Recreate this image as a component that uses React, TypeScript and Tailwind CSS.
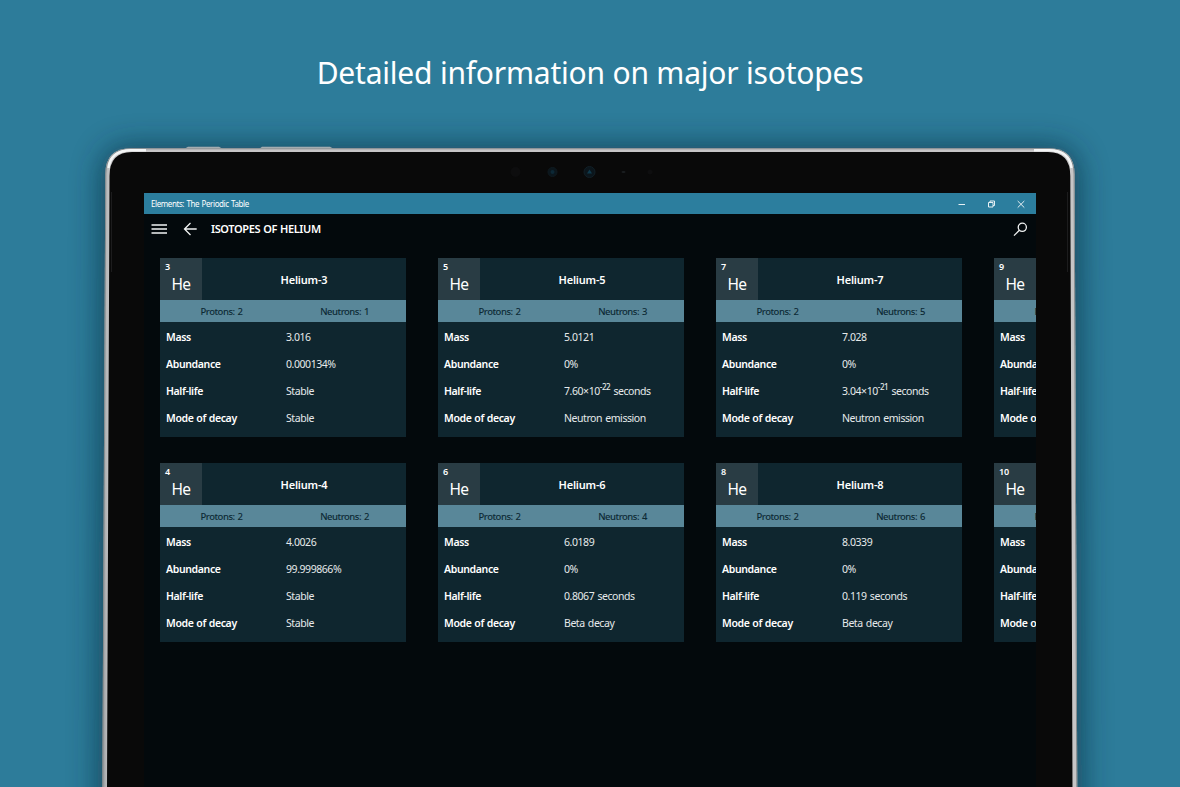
import type { ReactNode } from 'react'

type Isotope = {
  number: number
  neutrons: number
  mass: string
  abundance: string
  halfLife: ReactNode
  decay: string
}

const power = (base: string, exponent: string) => (
  <>
    {base}×10<sup className="-top-[5px] text-[8px] leading-none font-medium">{exponent}</sup> seconds
  </>
)

const rows: Isotope[][] = [
  [
    { number: 3, neutrons: 1, mass: '3.016', abundance: '0.000134%', halfLife: 'Stable', decay: 'Stable' },
    { number: 5, neutrons: 3, mass: '5.0121', abundance: '0%', halfLife: power('7.60', '-22'), decay: 'Neutron emission' },
    { number: 7, neutrons: 5, mass: '7.028', abundance: '0%', halfLife: power('3.04', '-21'), decay: 'Neutron emission' },
    { number: 9, neutrons: 7, mass: '', abundance: '', halfLife: '', decay: '' },
  ],
  [
    { number: 4, neutrons: 2, mass: '4.0026', abundance: '99.999866%', halfLife: 'Stable', decay: 'Stable' },
    { number: 6, neutrons: 4, mass: '6.0189', abundance: '0%', halfLife: '0.8067 seconds', decay: 'Beta decay' },
    { number: 8, neutrons: 6, mass: '8.0339', abundance: '0%', halfLife: '0.119 seconds', decay: 'Beta decay' },
    { number: 10, neutrons: 8, mass: '', abundance: '', halfLife: '', decay: '' },
  ],
]

function Tablet() {
  return (
    <svg className="absolute inset-0" width="1180" height="787" viewBox="0 0 1180 787" fill="none">
      <defs>
        <filter id="shadow" x="-10%" y="-10%" width="120%" height="130%">
          <feGaussianBlur stdDeviation="15" />
        </filter>
        <linearGradient id="edge" x1="102" x2="110" y1="0" y2="0" gradientUnits="userSpaceOnUse">
          <stop offset="0" stopColor="#8b9093" />
          <stop offset="0.5" stopColor="#b5b6b8" />
          <stop offset="1" stopColor="#c6c5c6" />
        </linearGradient>
      </defs>
      <path d="M98 840 L101 176 Q102 146 130 146 H1050 Q1078 146 1079 176 L1082 840 Z" fill="#0b2b3a" opacity="0.65" filter="url(#shadow)" />
      <path d="M184 149 L188 146.800 H219 L223 149 Z M259 149 L262 146.800 H330 L334 149 Z" fill="#a3adb1" />
      <path d="M102.300 790 L105.300 174 Q105.500 148.300 131 148.300 H1049 Q1074.300 148.300 1074.600 174 L1077.300 790 Z" fill="url(#edge)" />
      <path d="M102.800 790 L105.800 174 Q106 148.800 131 148.800 H1049 Q1073.800 148.800 1074.100 174 L1076.800 790" stroke="#858b8e" />
      <path d="M108.500 168 Q110.500 150.500 131 150.200 H146 M1034 150.200 H1049 Q1069.500 150.500 1071.500 168" stroke="#f3f5f5" strokeWidth="2.400" />
      <path d="M107 790 L109.500 176 Q109.500 152 132 152 H1048 Q1070.300 152 1070.300 176 L1072.500 790 Z" fill="#090909" />
      <path d="M111.500 192 V272 M1067.500 192 V272" stroke="#1c1c1d" />
      <circle cx="515.500" cy="172" r="5" fill="#0d0d0e" />
      <circle cx="552.500" cy="172" r="4.500" fill="#0b161c" stroke="#0f1a20" />
      <circle cx="552.500" cy="172" r="2" fill="#0c2836" />
      <circle cx="589.500" cy="172" r="5.500" fill="#0b151b" stroke="#111f26" />
      <path d="M589.500 169.500 l2.500 4 h-5 z" fill="#0f3a4d" />
      <ellipse cx="623.500" cy="172" rx="2" ry="1" fill="#1b1f21" />
      <circle cx="650" cy="172" r="2.500" fill="#0e0e0f" />
    </svg>
  )
}

function TitleBar() {
  return (
    <div className="flex h-[21px] items-center bg-[#2c7e9e] pl-[7px] text-white">
      <span className="flex-1 text-[8px] tracking-[-0.42px] [word-spacing:0.8px]">Elements: The Periodic Table</span>
      <svg width="88" height="20" viewBox="0 0 88 20" fill="none" stroke="#e6f0f4">
        <path d="M10.500 10.500 H17" />
        <path d="M40.500 8.500 H45 V13 H40.500 Z M42 8.500 V7 H46.500 V11.500 H45" />
        <path d="M69.700 7 L76.300 13.600 M76.300 7 L69.700 13.600" />
      </svg>
    </div>
  )
}

function Header() {
  return (
    <div className="flex h-[30px] items-center pl-[7px] text-white">
      <svg width="17" height="12" fill="none" stroke="#f1f3f3" strokeWidth="1.500">
        <path d="M0.500 2 H16 M0.500 6 H16 M0.500 10 H16" />
      </svg>
      <svg className="ml-[15px]" width="14" height="14" fill="none" stroke="#f1f3f3" strokeWidth="1.300">
        <path d="M13.700 7 H1.500 M7.500 1 L1.500 7 L7.500 13" />
      </svg>
      <h1 className="ml-[14px] flex-1 text-[11px] font-semibold tracking-[-0.38px] [word-spacing:0.6px]">ISOTOPES OF HELIUM</h1>
      <svg className="mr-2" width="15" height="15" fill="none" stroke="#f1f3f3" strokeWidth="1.300">
        <circle cx="9.300" cy="5.300" r="4.100" />
        <path d="M6.400 8.200 L1 13.600" />
      </svg>
    </div>
  )
}

function IsotopeCard({ isotope }: { isotope: Isotope }) {
  const properties = [
    { label: 'Mass', value: isotope.mass },
    { label: 'Abundance', value: isotope.abundance },
    { label: 'Half-life', value: isotope.halfLife },
    { label: 'Mode of decay', value: isotope.decay },
  ]

  return (
    <div className="h-[179px] w-[246px] shrink-0 bg-[#0f262f] text-white">
      <div className="flex h-[42px]">
        <div className="flex w-[42px] flex-col bg-[#293c44]">
          <span className="pt-1 pl-[5px] text-[9px] leading-[10px] font-semibold tracking-[-0.2px]">{isotope.number}</span>
          <span className="text-center text-[15.5px] leading-[24px] tracking-[-0.5px]">He</span>
        </div>
        <div className="flex flex-1 items-center justify-center pt-[3px] text-[11px] font-semibold tracking-[-0.2px]">
          Helium-{isotope.number}
        </div>
      </div>
      <div className="grid h-[22px] grid-cols-2 items-center bg-[#598799] pt-[2px] text-center text-[9.5px] font-medium tracking-[-0.48px] text-[#0d2a35] [word-spacing:0.9px]">
        <span>Protons: 2</span>
        <span>Neutrons: {isotope.neutrons}</span>
      </div>
      <dl className="pt-[2px] text-[10.5px]">
        {properties.map((p) => (
          <div key={p.label} className="flex h-[27px] items-center pl-[6px]">
            <dt className="w-[120px] font-semibold tracking-[-0.36px] [word-spacing:0.4px]">{p.label}</dt>
            <dd className="tracking-[-0.44px] whitespace-nowrap text-[#e6eaeb] [word-spacing:0.9px]">{p.value}</dd>
          </div>
        ))}
      </dl>
    </div>
  )
}

export default function App() {
  return (
    <main className="relative h-[787px] w-[1180px] overflow-hidden bg-[#2d7c9a] font-['Noto_Sans','Open_Sans',sans-serif]">
      <Tablet />
      <div className="relative flex h-full flex-col items-center">
        <h2 className="flex h-[193px] items-start pt-[52px] text-[30px] leading-[41px] tracking-[-0.21px] text-white">
          Detailed information on major isotopes
        </h2>
        <div className="w-[892px] flex-1 overflow-hidden bg-[#03090c]">
          <TitleBar />
          <Header />
          <div className="flex flex-col gap-[26px] pt-[14px] pl-4">
            {rows.map((row) => (
              <div key={row[0].number} className="flex gap-8">
                {row.map((isotope) => (
                  <IsotopeCard key={isotope.number} isotope={isotope} />
                ))}
              </div>
            ))}
          </div>
        </div>
      </div>
    </main>
  )
}
